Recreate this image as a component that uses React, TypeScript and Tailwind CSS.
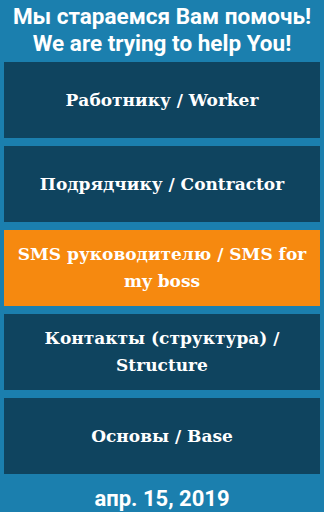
import React from 'react';

const items = [
  { label: 'Работнику / Worker', active: false },
  { label: 'Подрядчику / Contractor', active: false },
  { label: 'SMS руководителю / SMS for my boss', active: true },
  { label: 'Контакты (структура) / Structure', active: false },
  { label: 'Основы / Base', active: false },
];

export default function App() {
  return (
    <div className="w-[324px] h-[512px] bg-[#1b7fae] flex flex-col px-1 overflow-hidden">
      {/* Header */}
      <div className="h-[62px] shrink-0 flex flex-col items-center justify-center text-white font-bold text-[22.5px] leading-[27px] font-['Roboto',sans-serif] pb-[2px]">
        <div>Мы стараемся Вам помочь!</div>
        <div>We are trying to help You!</div>
      </div>

      {/* Menu */}
      <div className="flex flex-col gap-2 shrink-0">
        {items.map((item) => (
          <div
            key={item.label}
            className={`h-[76px] shrink-0 flex items-center justify-center text-center px-2 text-white font-bold text-[17px] leading-[27px] font-['DejaVu_Serif',serif] ${
              item.active ? 'bg-[#f6890f]' : 'bg-[#0f445f]'
            }`}
          >
            {item.label}
          </div>
        ))}
      </div>

      {/* Date */}
      <div className="shrink-0 pt-[12px] text-center leading-[26px] text-white font-bold text-[22px] font-['Roboto',sans-serif]">
        апр. 15, 2019
      </div>
    </div>
  );
}
